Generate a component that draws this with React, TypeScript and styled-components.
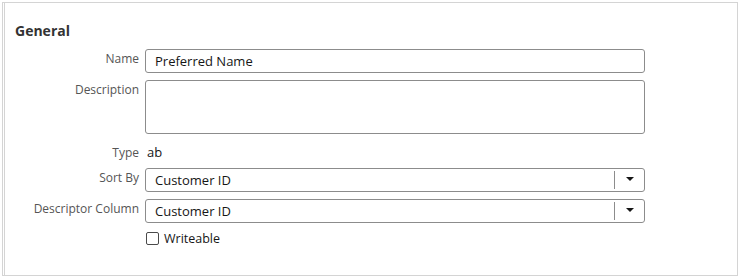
import React from 'react';
import styled, { createGlobalStyle } from 'styled-components';

const GlobalStyle = createGlobalStyle`
  html, body {
    margin: 0;
    padding: 0;
    background: #ffffff;
  }
  body {
    font-family: "Open Sans", "Noto Sans", Arial, sans-serif;
  }
`;

const Page = styled.div`
  width: 740px;
  height: 278px;
  padding: 2px 2px 0 2px;
  box-sizing: border-box;
`;

const Panel = styled.div`
  height: 274px;
  box-sizing: border-box;
  border: 1px solid #d4d4d4;
  border-left: 3px double #d4d4d4;
  padding: 18px 0 0 10px;
`;

const Title = styled.div`
  font-size: 14px;
  font-weight: 700;
  color: #333333;
  line-height: 20px;
  margin-bottom: 8px;
`;

const Form = styled.div`
  display: grid;
  grid-template-columns: 124px 500px;
  column-gap: 6px;
  row-gap: 7px;
  align-items: start;
`;

const Label = styled.div<{ $top?: number }>`
  font-size: 12px;
  color: #555555;
  text-align: right;
  line-height: 16px;
  padding-top: ${({ $top }) => $top ?? 2}px;
`;

const TextInput = styled.div`
  height: 24px;
  box-sizing: border-box;
  border: 1px solid #8c8c8c;
  border-radius: 3px;
  padding: 0 9px;
  display: flex;
  align-items: center;
  font-size: 13px;
  color: #161616;
`;

const TextArea = styled.div`
  height: 54px;
  box-sizing: border-box;
  border: 1px solid #8c8c8c;
  border-radius: 3px;
`;

const Value = styled.div`
  font-size: 13px;
  color: #161616;
  line-height: 18px;
  padding: 2px 0 0 2px;
`;

const Select = styled.div`
  height: 24px;
  box-sizing: border-box;
  border: 1px solid #8c8c8c;
  border-radius: 3px;
  display: flex;
  align-items: center;
  font-size: 13px;
  color: #161616;
`;

const SelectText = styled.div`
  flex: 1;
  padding-left: 9px;
`;

const Divider = styled.div`
  width: 1px;
  height: 18px;
  background: #8c8c8c;
`;

const Arrow = styled.div`
  width: 29px;
  display: flex;
  justify-content: center;
  align-items: center;
  &::after {
    content: '';
    border-left: 4px solid transparent;
    border-right: 4px solid transparent;
    border-top: 4px solid #161616;
    margin-top: -2px;
  }
`;

const CheckRow = styled.label`
  display: flex;
  align-items: center;
  gap: 5px;
  font-size: 12.5px;
  color: #161616;
  padding-left: 1px;
`;

const Box = styled.span`
  width: 13px;
  height: 13px;
  box-sizing: border-box;
  border: 1.5px solid #4a4a4a;
  border-radius: 2px;
  display: inline-block;
`;

const App = () => {
  return (
    <>
      <GlobalStyle />
      <Page>
        <Panel>
          <Title>General</Title>
          <Form>
            <Label>Name</Label>
            <TextInput>Preferred Name</TextInput>
            <Label>Description</Label>
            <TextArea />
            <Label $top={4}>Type</Label>
            <Value>ab</Value>
            <Label>Sort By</Label>
            <Select>
              <SelectText>Customer ID</SelectText>
              <Divider />
              <Arrow />
            </Select>
            <Label>Descriptor Column</Label>
            <Select>
              <SelectText>Customer ID</SelectText>
              <Divider />
              <Arrow />
            </Select>
            <div />
            <CheckRow>
              <Box />
              Writeable
            </CheckRow>
          </Form>
        </Panel>
      </Page>
    </>
  );
};

export default App;
